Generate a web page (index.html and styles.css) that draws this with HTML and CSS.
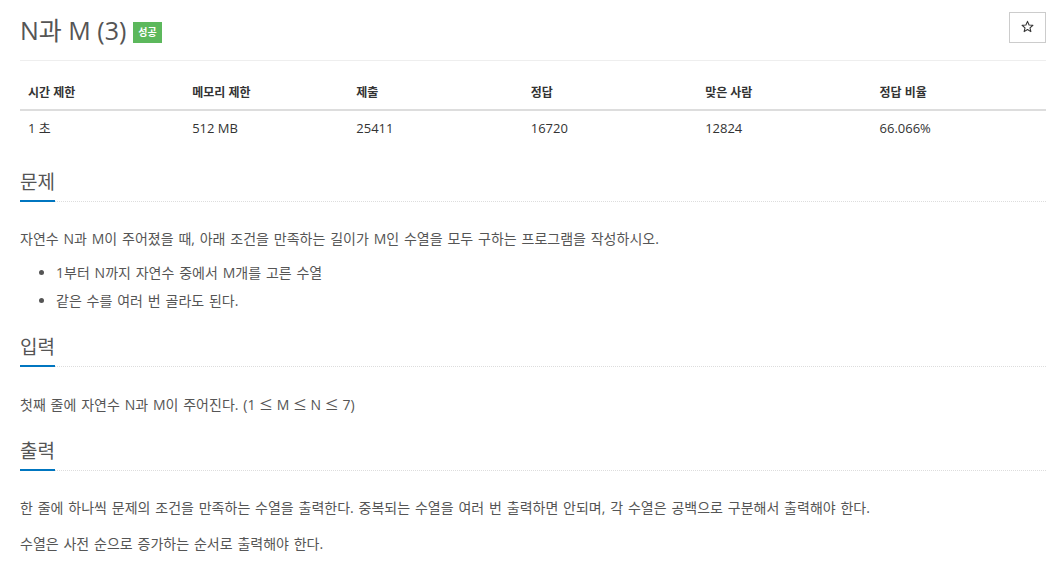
FILE: index.html
```html
<!DOCTYPE html>
<html lang="ko">
<head>
<meta charset="UTF-8">
<meta name="viewport" content="width=device-width, initial-scale=1.0">
<title>N과 M (3)</title>
<link rel="stylesheet" href="styles.css">
</head>
<body><div class="container">
    <div class="page-header">
        <h1><span id="problem_title">N과 M (3)</span><span class="label label-success">성공</span></h1>
        <button class="btn-star" title="즐겨찾기">
            <svg width="13" height="13" viewBox="0 0 24 24"><path d="M12 2.5l2.9 6.6 7.1.6-5.4 4.7 1.6 7-6.2-3.7-6.2 3.7 1.6-7L2 9.7l7.1-.6z" fill="none" stroke="#333" stroke-width="2" stroke-linejoin="round"/></svg>
        </button>
    </div>

<table class="problem-info">
    <thead>
        <tr>
            <th class="w16">시간 제한</th>
            <th class="w16">메모리 제한</th>
            <th class="w17">제출</th>
            <th class="w17">정답</th>
            <th class="w17">맞은 사람</th>
            <th class="w17">정답 비율</th>
        </tr>
    </thead>
    <tbody>
        <tr>
            <td>1 초</td>
            <td>512 MB</td>
            <td>25411</td>
            <td>16720</td>
            <td>12824</td>
            <td>66.066%</td>
        </tr>
    </tbody>
</table>

<section class="problem-section">
    <div class="headline"><h2><span>문제</span></h2></div>
    <div class="problem-text">
        <p>자연수 N과 M이 주어졌을 때, 아래 조건을 만족하는 길이가 M인 수열을 모두 구하는 프로그램을 작성하시오.</p>
        <ul>
            <li>1부터 N까지 자연수 중에서 M개를 고른 수열</li>
            <li>같은 수를 여러 번 골라도 된다.</li>
        </ul>
    </div>
</section>

<section class="problem-section">
    <div class="headline"><h2><span>입력</span></h2></div>
    <div class="problem-text">
        <p>첫째 줄에 자연수 N과 M이 주어진다. <span class="math">(1 <span class="le">&le;</span> M <span class="le">&le;</span> N <span class="le">&le;</span> 7)</span></p>
    </div>
</section>

<section class="problem-section">
    <div class="headline"><h2><span>출력</span></h2></div>
    <div class="problem-text">
        <p>한 줄에 하나씩 문제의 조건을 만족하는 수열을 출력한다. 중복되는 수열을 여러 번 출력하면 안되며, 각 수열은 공백으로 구분해서 출력해야 한다.</p>
        <p>수열은 사전 순으로 증가하는 순서로 출력해야 한다.</p>
    </div>
</section>

</div>
</body>
</html>
```

FILE: styles.css
```css
body {
    margin: 0;
    font-family: "Open Sans", "Noto Sans CJK KR", sans-serif;
    font-size: 13px;
    color: #555;
    background-color: #fff;
}
.container {
    padding: 0 14px 0 20px;
}
.page-header {
    display: flex;
    justify-content: space-between;
    align-items: flex-start;
    padding: 12px 0 15px;
    border-bottom: 1px solid #eee;
}
h1 {
    display: flex;
    align-items: center;
    gap: 7px;
    margin: 3px 0 0;
    font-size: 25px;
    font-weight: 400;
    line-height: 30px;
    color: #555;
}
.label {
    margin-top: 5px;
    padding: 5px 5px 6px;
    font-size: 10px;
    font-weight: 700;
    line-height: 10px;
    color: #fff;
}
.label-success {
    background-color: #5cb85c;
}
.btn-star {
    display: flex;
    align-items: center;
    justify-content: center;
    width: 37px;
    height: 31px;
    padding: 0 0 3px;
    background-color: #fff;
    border: 1px solid #ccc;
    border-radius: 0;
    cursor: pointer;
}
table {
    border-collapse: collapse;
    width: 100%;
    margin-top: 15px;
}
th, td {
    text-align: left;
    padding: 8px;
    line-height: 18px;
    color: #333;
}
th {
    padding-bottom: 7px;
    font-size: 12px;
    font-weight: 700;
    border-bottom: 2px solid #ddd;
}
.w16 {
    width: 16%;
}
.w17 {
    width: 17%;
}
.problem-section {
    margin-top: 23px;
}
.problem-section:first-of-type {
    margin-top: 26px;
}
.headline h2 {
    display: flex;
    margin: 0;
    font-size: 19px;
    font-weight: 400;
    line-height: 22px;
    color: #555;
    border-bottom: 1px dotted #ddd;
}
.headline h2 span {
    padding-bottom: 7px;
    margin-bottom: -1px;
    border-bottom: 2px solid #0076c0;
}
.problem-text {
    padding-top: 25px;
    font-size: 14px;
    line-height: 24px;
    word-spacing: 1.2px;
}
.problem-text p {
    margin: 0 0 12px;
}
.problem-text ul {
    margin: -2px 0 0;
    padding-left: 36px;
}
.problem-text li {
    margin-bottom: 4px;
}
.math {
    word-spacing: 0;
}
.le {
    font-family: "Noto Sans CJK KR", sans-serif;
}
```
